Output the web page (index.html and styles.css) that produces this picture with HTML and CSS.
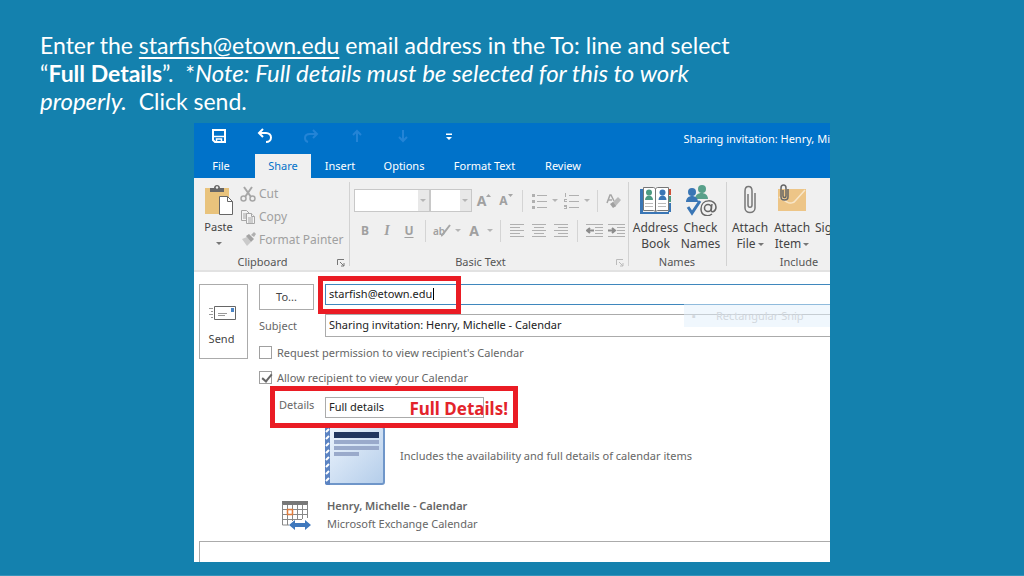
FILE: index.html
```html
<!DOCTYPE html>
<html lang="en">
<head>
<meta charset="utf-8">
<title>Sharing invitation instructions</title>
<link rel="stylesheet" href="styles.css">
</head>
<body>
<main class="slide">
  <p class="instructions">Enter the <a href="mailto:starfish@etown.edu">starfish@etown.edu</a> email address in the To: line and select<br>“<b>Full Details</b>”.&nbsp; *<i>Note: Full details must be selected for this to work<br>properly.</i>&nbsp; Click send.</p>

  <section class="window">
    <header class="titlebar">
      <div class="quick">
        <button class="q" aria-label="Save"><svg width="16" height="16" viewBox="0 0 16 16" fill="none" stroke="#fff" stroke-width="2"><path d="M2 2h12v12H4l-2-2z"/><path d="M2 8.500h12" stroke-width="1.500"/><path d="M5.500 14v-3h5v3" stroke-width="1.500"/></svg></button>
        <button class="q" aria-label="Undo"><svg width="16" height="16" viewBox="0 0 16 16" fill="none" stroke="#fff" stroke-width="2"><path d="M6 1L2 5l4 4M2 5h7c3 0 5 2 5 4.500s-2 4.500-5 4.500"/></svg></button>
        <button class="q" aria-label="Redo"><svg width="16" height="16" viewBox="0 0 16 16" fill="none" stroke="#2384d6" stroke-width="2"><path d="M10 2l4 4-4 4M14 6H7c-3 0-5 1.500-5 4s1 3.500 3 4"/></svg></button>
        <button class="q" aria-label="Previous item"><svg width="16" height="16" viewBox="0 0 16 16" fill="none" stroke="#2384d6" stroke-width="2"><path d="M8 14V3M4 7l4-4 4 4"/></svg></button>
        <button class="q" aria-label="Next item"><svg width="16" height="16" viewBox="0 0 16 16" fill="none" stroke="#2384d6" stroke-width="2"><path d="M8 2v11M4 9l4 4 4-4"/></svg></button>
        <button class="q" aria-label="Customize toolbar"><svg width="16" height="16" viewBox="0 0 16 16"><path d="M5 5.500h6v1.500H5zM5 9h6l-3 3z" fill="#fff"/></svg></button>
        <span class="title">Sharing invitation: Henry, Mi</span>
      </div>
      <nav class="tabs">
        <button class="tab file">File</button>
        <button class="tab active">Share</button>
        <button class="tab">Insert</button>
        <button class="tab options">Options</button>
        <button class="tab format">Format Text</button>
        <button class="tab review">Review</button>
      </nav>
    </header>

    <div class="ribbon">
      <div class="group clipboard">
        <div class="tools">
          <button class="big paste">
            <svg width="30" height="32" viewBox="0 0 30 32"><path d="M1 4h24v26H1z" fill="#e9c37c"/><path d="M6 8V4h4c0-4 6-4 6 0h4v4z" fill="#666"/><circle cx="13" cy="3.500" r="1.200" fill="#f0f0f0"/><path d="M15.500 12.500h8l5 5v13h-13z" fill="#fff" stroke="#666"/><path d="M23.500 12.500v5h5" fill="none" stroke="#666"/></svg>
            <span>Paste</span><i class="arrow dark"></i>
          </button>
          <div class="commands">
            <button class="cmd"><svg width="16" height="16" viewBox="0 0 16 16" fill="none" stroke="#a6a6a6" stroke-width="1.500"><path d="M4 1l7 10M12 1L5 11" stroke-width="2"/><circle cx="3.500" cy="12.500" r="2.500"/><circle cx="12.500" cy="12.500" r="2.500"/></svg>Cut</button>
            <button class="cmd"><svg width="16" height="16" viewBox="0 0 16 16" fill="#f4f4f4" stroke="#a6a6a6"><path d="M1.500 1.500h5l3 3v7h-8z"/><path d="M3 5h4M3 7h4M3 9h3"/><path d="M6.500 4.500h5l3 3v7h-8z"/><path d="M11.500 4.500v3h3M8 9h5M8 11h5M8 13h5"/></svg>Copy</button>
            <button class="cmd"><svg width="16" height="16" viewBox="0 0 16 16"><path d="M2 7l5-2 4 5-4 4z" fill="#cacaca"/><path d="M6 4l3-2 5 5-3 3z" fill="#a3a3a3"/><path d="M11 3l3-3 2 2-2 3z" fill="#b0b0b0"/></svg>Format Painter</button>
          </div>
        </div>
        <div class="caption">Clipboard<svg class="launcher" width="8" height="8" viewBox="0 0 8 8" fill="none" stroke="#777"><path d="M.5 6V.5H7M3 3l4 4M7 4v3H4"/></svg></div>
      </div>

      <div class="group basic">
        <div class="tools rows">
          <div class="row">
            <span class="combobox font"><select aria-label="Font" disabled></select><i class="arrow"></i></span>
            <span class="combobox size"><select aria-label="Font size" disabled></select><i class="arrow"></i></span>
            <button class="t" aria-label="Grow font"><b class="grow">A</b><svg width="5" height="14" viewBox="0 0 5 14"><path d="M0 3l2.500-3L5 3z" fill="#a6a6a6"/></svg></button>
            <button class="t" aria-label="Shrink font"><b>A</b><svg width="5" height="14" viewBox="0 0 5 14"><path d="M0 0l2.500 3L5 0z" fill="#a6a6a6"/></svg></button>
            <span class="sep"></span>
            <button class="t" aria-label="Bullets"><svg width="15" height="16" viewBox="0 0 15 16" fill="#b0b0b0"><path d="M0 1h3v3H0zM0 7h3v3H0zM0 13h3v3H0zM5 2h10v1H5zM5 8h10v1H5zM5 14h10v1H5z"/></svg></button><i class="arrow"></i>
            <button class="t" aria-label="Numbering"><svg width="15" height="16" viewBox="0 0 15 16" fill="#b0b0b0"><path d="M1 0h1v4H1zM0 6h3v1H1v1h2v1H0zM0 12h3v4H0v-1h2v-1H0zM5 2h10v1H5zM5 8h10v1H5zM5 14h10v1H5z"/></svg></button><i class="arrow"></i>
            <span class="sep"></span>
            <button class="t" aria-label="Clear formatting"><svg width="16" height="16" viewBox="0 0 16 16"><path d="M1 10L4 2h1l3 6M2 7h4" fill="none" stroke="#a6a6a6" stroke-width="1.500"/><path d="M6 10l6-6 3 3-6 7z" fill="#bbb"/><path d="M4 11l3-2 3 4-3 2z" fill="#a0a0a0"/></svg></button>
          </div>
          <div class="row">
            <button class="t"><b>B</b></button>
            <button class="t"><b class="italic">I</b></button>
            <button class="t"><b class="under">U</b></button>
            <span class="sep"></span>
            <button class="t hl" aria-label="Highlight"><b>ab</b><svg width="10" height="14" viewBox="0 0 10 14"><path d="M9 1L2 10l-2 2" fill="none" stroke="#a6a6a6" stroke-width="2"/></svg></button><i class="arrow"></i>
            <button class="t" aria-label="Font color"><b class="grow">A</b></button><i class="arrow"></i>
            <span class="sep"></span>
            <button class="t" aria-label="Align left"><svg width="14" height="13" viewBox="0 0 14 13" stroke="#b0b0b0"><path d="M0 .5h14M0 3.500h10M0 6.500h14M0 9.500h10M0 12.500h14"/></svg></button>
            <button class="t" aria-label="Center"><svg width="14" height="13" viewBox="0 0 14 13" stroke="#b0b0b0"><path d="M0 .5h14M2 3.500h10M0 6.500h14M2 9.500h10M0 12.500h14"/></svg></button>
            <button class="t" aria-label="Align right"><svg width="14" height="13" viewBox="0 0 14 13" stroke="#b0b0b0"><path d="M0 .5h14M4 3.500h10M0 6.500h14M4 9.500h10M0 12.500h14"/></svg></button>
            <span class="sep"></span>
            <button class="t" aria-label="Decrease indent"><svg width="17" height="14" viewBox="0 0 17 14" stroke="#b0b0b0" fill="none"><path d="M0 .5h17M9 3.500h8M9 6.500h8M9 9.500h8M0 12.500h17"/><path d="M8 6.500H2M4 4L1 6.500 4 9" stroke="#8c8c8c" stroke-width="2"/></svg></button>
            <button class="t" aria-label="Increase indent"><svg width="17" height="14" viewBox="0 0 17 14" stroke="#b0b0b0" fill="none"><path d="M0 .5h17M9 3.500h8M9 6.500h8M9 9.500h8M0 12.500h17"/><path d="M0 6.500h6M4 4l3 2.500L4 9" stroke="#8c8c8c" stroke-width="2"/></svg></button>
          </div>
        </div>
        <div class="caption">Basic Text<svg class="launcher" width="8" height="8" viewBox="0 0 8 8" fill="none" stroke="#bbb"><path d="M.5 6V.5H7M3 3l4 4M7 4v3H4"/></svg></div>
      </div>

      <div class="group names">
        <div class="tools">
          <button class="big"><svg width="32" height="32" viewBox="0 0 32 32"><path d="M0 5h3v23h26v2H0z" fill="#3a76b5"/><path d="M28 5h3v6h-3z" fill="#cf5138"/><path d="M28 12h3v6h-3z" fill="#4d9b82"/><path d="M28 19h3v9h-3z" fill="#3a76b5"/><path d="M3.500 3.500h10l2 1 2-1h11v23h-11l-2 1-2-1h-10z" fill="#fff" stroke="#777"/><path d="M15.500 5v22" stroke="#777"/><circle cx="9" cy="8.500" r="3" fill="#4d9b82"/><path d="M5 16c0-6 8-6 8 0z" fill="#4d9b82"/><circle cx="22.500" cy="8.500" r="3" fill="#3a76b5"/><path d="M18.500 16c0-6 8-6 8 0z" fill="#3a76b5"/><path d="M5 19.500h8M5 22.500h8M18 19.500h8M18 22.500h8" stroke="#bbb"/></svg><span>Address<br>Book</span></button>
          <button class="big"><svg width="32" height="32" viewBox="0 0 32 32"><circle cx="17" cy="5" r="4" fill="#58a08a"/><path d="M10 15c0-8 13-8 13 0z" fill="#58a08a"/><circle cx="7" cy="8" r="4" fill="#3a76b5"/><path d="M1 18c0-8 12-8 12 0z" fill="#3a76b5"/><path d="M3 23l4 6 8-12" fill="none" stroke="#3a76b5" stroke-width="3"/><g fill="none" stroke="#666" stroke-width="1.500"><circle cx="23" cy="24" r="3.500"/><path d="M27 20l-1 6c0 3 5 2 5-3 0-8-15-9-15 2 0 7 7 8 11 5"/></g></svg><span>Check<br>Names</span></button>
        </div>
        <div class="caption">Names</div>
      </div>

      <div class="group include">
        <div class="tools">
          <button class="big"><svg width="16" height="32" viewBox="0 0 16 32" fill="none" stroke="#777" stroke-width="1.500"><path d="M6 10v11c0 3 4 3 4 0V7c0-6-7-6-7 0v17c0 6 10 6 10 0V9"/></svg><span>Attach<br>File<i class="arrow dark"></i></span></button>
          <button class="big"><svg width="30" height="32" viewBox="0 0 30 32"><path d="M1 5h28v22H1z" fill="#edc587"/><path d="M2 13l8 5c3 2 7 1 9-2l9-10" fill="none" stroke="#f8e6c8" stroke-width="1.500"/><path d="M6 6v6c0 2 3 2 3 0V4c0-4-5-4-5 0v9c0 4 7 4 7 0V5" fill="none" stroke="#666" stroke-width="1.500"/></svg><span>Attach<br>Item<i class="arrow dark"></i></span></button>
          <button class="big sig"><span>Sig</span></button>
        </div>
        <div class="caption">Include</div>
      </div>
    </div>

    <form class="compose">
      <button class="send" type="button"><svg width="28" height="16" viewBox="0 0 28 16"><path d="M6.500 1.500h21v13h-21z" fill="#fff" stroke="#666"/><path d="M23 3h3v4h-3z" fill="#4a84c4"/><path d="M10 8.500h9M10 10.500h7M1 3.500h4M3 6.500h2M1 9.500h4M3 12.500h2" stroke="#999"/></svg>Send</button>
      <div class="fields">
        <button class="to" type="button">To...</button>
        <div class="tocell">
          <input class="toinput" type="text" aria-label="To" value="starfish@etown.edu">
          <span class="caret"></span>
          <span class="mark tomark"></span>
        </div>
        <label class="sublabel" for="subject">Subject</label>
        <input class="subject" id="subject" type="text" value="Sharing invitation: Henry, Michelle - Calendar">
        <label class="check"><input type="checkbox">Request permission to view recipient's Calendar</label>
        <label class="check"><input type="checkbox" checked>Allow recipient to view your Calendar</label>
        <div class="details">
          <label for="details">Details</label>
          <select id="details"><option>Full details</option></select>
          <span class="mark detmark">Full Details!</span>
        </div>
        <div class="preview">
          <svg width="60" height="60" viewBox="0 0 60 60"><defs><linearGradient id="g" x1="0" y1="0" x2="1" y2="1"><stop offset="0" stop-color="#eef5fd"/><stop offset="1" stop-color="#b4cdea"/></linearGradient></defs><rect x="1" y="1" width="58" height="57" rx="2" fill="url(#g)" stroke="#6f96c9" stroke-width="2"/><path d="M0 0h5v59H2q-2 0-2-2z" fill="#5b83c2"/><path d="M1 6l3-3M1 13l3-3M1 20l3-3M1 27l3-3M1 34l3-3M1 41l3-3M1 48l3-3M1 55l3-3" stroke="#fff" stroke-width="2"/><path d="M9 6h45v6H9z" fill="#21365f"/><path d="M9 14h45v4H9zM9 20h45v4H9zM9 26h25v4H9z" fill="#9aaacb"/></svg>
          <span>Includes the availability and full details of calendar items</span>
        </div>
        <div class="calendar">
          <svg width="30" height="30" viewBox="0 0 30 30"><path d="M1 1h26v4H1z" fill="#777"/><path d="M1.500 4v21H8M26.500 4v14M1 9.500h26M1 14.500h26M1 19.500h20M6.500 5v20M11.500 5v16M16.500 5v14M21.500 5v14" fill="none" stroke="#888"/><path d="M6.500 9.500h5v5h-5z" fill="#fff" stroke="#e07b3c" stroke-width="1.500"/><path d="M8 25l6-5v3h10v-3l6 5-6 5v-3H14v3z" fill="#3f78bd"/></svg>
          <p><b>Henry, Michelle - Calendar</b><br>Microsoft Exchange Calendar</p>
        </div>
      </div>
      <textarea class="message" aria-label="Message"></textarea>
      <div class="ghost"><i>▪</i><span>Rectangular Snip</span></div>
    </form>
  </section>
</main>
</body>
</html>
```

FILE: styles.css
```css
* { box-sizing: border-box; }
body { margin: 0; background: #1481ae; }
button, input, select, textarea {
  font: inherit; color: inherit; background: none; border: 0; padding: 0; margin: 0; border-radius: 0;
}
svg { display: block; flex: none; }

.slide { min-height: 100vh; padding: 31px 0 13px; border-bottom: 1px solid #3594bb; }
.instructions {
  margin: 0 40px 8px; color: #fff;
  font: 23px/28px Lato, "Open Sans", sans-serif;
}
.instructions i { font-size: 24px; line-height: 1; }
.instructions a { color: inherit; text-underline-offset: 3px; text-decoration-thickness: 2px; }

.window {
  margin: 0 194px; overflow: hidden; background: #fff; color: #444;
  font: 11px/16px "Noto Sans", "Open Sans", sans-serif;
}
.titlebar { background: #0072c9; color: #fff; height: 55px; }
.quick { display: flex; align-items: center; height: 31px; padding: 0 0 5px 2px; }
.q { flex: none; width: 46px; display: flex; justify-content: center; }
.title { margin-left: auto; padding-top: 5px; white-space: nowrap; }
.tabs { display: flex; height: 24px; }
.tab { flex: none; width: 58px; text-align: center; white-space: nowrap; }
.tab.file { width: 61px; padding-right: 7px; }
.tab.active { width: 56px; background: #f0f0f0; color: #0072c9; }
.tab.options { width: 70px; }
.tab.format { width: 91px; }
.tab.review { width: 66px; }

.ribbon { display: flex; height: 94px; background: #f0f0f0; border-bottom: 2px solid #e2e2e2; overflow: hidden; }
.group { flex: none; position: relative; display: flex; flex-direction: column; padding: 4px 0 0; }
.group + .group::before { content: ""; position: absolute; left: 0; top: 4px; bottom: 4px; width: 1px; background: #d2d2d2; }
.tools { flex: 1; display: flex; }
.caption { position: relative; height: 16px; text-align: center; color: #555; }
.launcher { position: absolute; right: 4px; top: 5px; }
.clipboard { width: 155px; }
.clipboard .caption { padding-right: 18px; }
.basic { width: 279px; }
.basic .caption { padding-right: 16px; }
.names { width: 98px; }
.include { width: 146px; }
.big { display: flex; flex-direction: column; align-items: center; width: 45px; line-height: 16px; white-space: nowrap; }
.paste { width: 46px; padding: 2px 0 0 3px; }
.paste span { line-height: 22px; }
.paste .arrow { margin-top: 4px; }
.names .tools, .include .tools { padding: 2px 0 0 5px; font-size: 12px; }
.names .big svg, .include .big svg { margin-bottom: 4px; }
.include .tools { padding-left: 3px; }
.include .big { width: 42px; }
.include .sig { padding: 36px 0 0 2px; align-items: flex-start; }
.arrow { display: inline-block; flex: none; border: 3px solid transparent; border-top-color: #b5b5b5; border-bottom: 0; margin: 0 2px; }
.arrow.dark { border-top-color: #777; vertical-align: middle; }
.big span .arrow { margin-right: 0; }
.commands { display: flex; flex-direction: column; color: #a0a0a0; }
.cmd { display: flex; align-items: center; gap: 3px; height: 23px; font-size: 12px; white-space: nowrap; }
.rows { flex-direction: column; gap: 7px; padding: 7px 0 0 5px; }
.row { display: flex; align-items: center; height: 23px; color: #a0a0a0; }
.combobox { flex: none; display: flex; align-items: center; height: 23px; padding-right: 1px; border: 1px solid #c8c8c8; background: #e8e8e8; }
.combobox select { appearance: none; flex: 1; min-width: 0; align-self: stretch; background: #fff; opacity: 1; }
.combobox.font { width: 76px; }
.combobox.size { width: 42px; margin-right: 1px; }
.t { flex: none; width: 22px; display: flex; align-items: center; justify-content: center; font-size: 12px; }
.row .grow { font-size: 14px; }
.italic { font-family: "Liberation Serif", serif; font-style: italic; font-size: 14px; }
.under { text-decoration: underline; text-underline-offset: 2px; }
.hl b { font-size: 10px; font-weight: 600; }
.hl svg { margin-left: -4px; }
.sep { flex: none; width: 1px; height: 22px; margin: 0 5px; background: #d4d4d4; }

.compose { position: relative; display: grid; grid-template-columns: 49px 1fr; column-gap: 11px; padding: 12px 0 0 5px; }
.send { display: flex; flex-direction: column; align-items: center; gap: 10px; height: 75px; padding: 20px 4px 0 0; border: 1px solid #ababab; }
.fields { display: grid; grid-template-columns: 55px 1fr; column-gap: 11px; grid-template-rows: 27px 29px 25px 25px 34px 64px 52px; }
.to { border: 1px solid #ababab; height: 26px; }
.tocell { position: relative; }
.toinput, .subject { width: 100%; padding: 0 3px 3px; color: #222; border-right: 0; }
.toinput { display: block; height: 21px; border: 1px solid #3f87bd; border-right: 0; }
.caret { position: absolute; left: 108px; top: 4px; width: 1px; height: 12px; background: #000; }
.mark { position: absolute; border: 5px solid #ea1c24; pointer-events: none; }
.tomark { left: -7px; top: -8px; width: 143px; height: 38px; }
.sublabel { align-self: center; color: #666; }
.subject { height: 23px; margin-top: 3px; border: 1px solid #ababab; border-right: 0; }
.check { grid-column: 1 / -1; display: flex; align-items: center; gap: 5px; color: #666; }
.check input { appearance: none; width: 13px; height: 13px; border: 1px solid #a0a0a0; background: #fff; }
.check input:checked::before { content: ""; display: block; width: 4px; height: 8px; margin-left: 4px; border: solid #666; border-width: 0 2px 2px 0; transform: rotate(40deg); }
.details { grid-column: 1 / -1; position: relative; display: flex; align-items: center; color: #666; }
.details label { width: 66px; padding: 0 0 5px 20px; }
.details select { appearance: none; width: 159px; height: 21px; padding-left: 3px; border: 1px solid #ababab; color: #222; }
.detmark { left: 11px; top: -4px; width: 248px; height: 42px; padding-right: 5px; color: #e3242b; text-align: right; font: bold 17px/36px "Noto Sans", sans-serif; }
.preview { grid-column: 2; display: flex; gap: 15px; align-items: center; color: #666; }
.calendar { grid-column: 1 / -1; display: flex; align-items: center; gap: 16px; padding: 2px 0 0 22px; color: #666; }
.calendar p { margin: 0; line-height: 18px; }
.calendar b { font-weight: 600; }
.message { grid-column: 1 / -1; height: 21px; margin-top: 1px; border: 1px solid #ababab; border-width: 1px 0 0 1px; resize: none; }
.ghost { position: absolute; right: 0; top: 32px; width: 146px; height: 23px; display: flex; align-items: center; gap: 20px; padding-left: 8px; background: rgba(226, 240, 252, .5); color: #d2d8de; font-size: 11px; }
.ghost i { font-style: normal; }
```
